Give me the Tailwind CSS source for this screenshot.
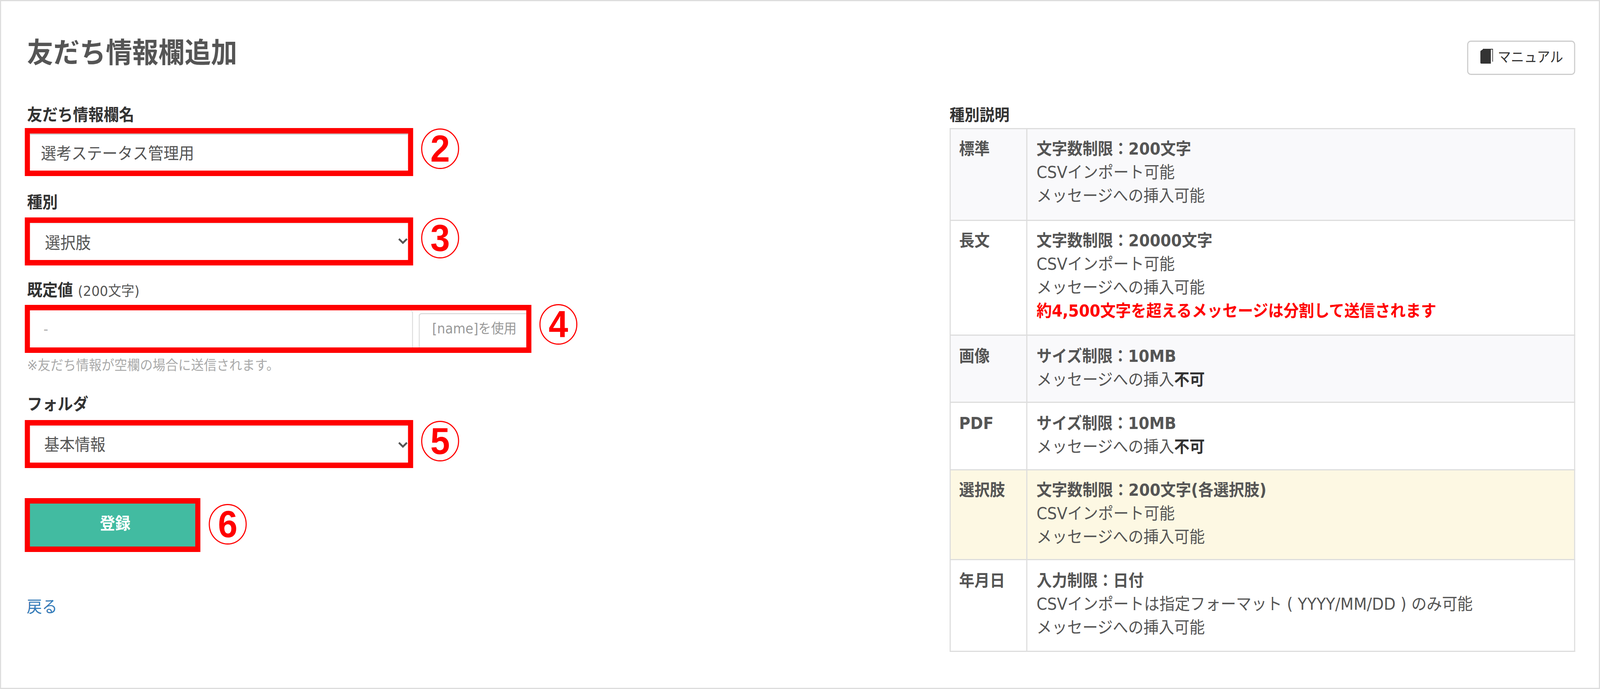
<!DOCTYPE html>
<html lang="ja">
<head>
<meta charset="utf-8">
<title>友だち情報欄追加</title>
<script src="https://cdn.jsdelivr.net/npm/@tailwindcss/browser@4"></script>
</head>
<body class="bg-white overflow-hidden">
<div class="w-[4384px] h-[1765px] origin-top-left scale-x-[0.9343] box-border border-[3px] border-[#dddddd] px-[65px] pt-[99px] overflow-hidden bg-white text-[#555555] text-[42px] font-['DejaVu_Sans','Noto_Sans_CJK_JP',sans-serif]">

  <header class="flex justify-between items-start h-[90px] mb-[82px]">
    <h1 class="text-[72px] leading-[72px] font-bold text-[#555555] ml-[6px] mt-[-3px] whitespace-nowrap">友だち情報欄追加</h1>
    <div class="mt-[2px] w-[296px] h-[88px] box-border border-[3px] border-[#cccccc] rounded-[10px] flex items-start pl-[33px] pt-[15px] text-[36px] leading-[50px] text-[#333333]">
      <svg class="mt-[3px] mr-[13px] shrink-0" width="35" height="38" viewBox="0 0 35 38"><path d="M0 8Q0 5 3 4L6 2H29V38H3Q0 38 0 35Z" fill="#333333"/><path d="M7 1H34V33" fill="none" stroke="#333333" stroke-width="2"/></svg>
      <span>マニュアル</span>
    </div>
  </header>

  <main class="flex justify-between items-start">
    <section class="w-[1600px]">
      <label class="block pl-[6px] text-[42px] leading-[42px] font-bold text-[#333333] mb-[12px]">友だち情報欄名</label>
      <div class="flex items-start gap-[22px]">
        <div class="w-[1064px] h-[123px] box-border border-[14px] border-[#ff0000] bg-white">
          <div class="h-full box-border border-t-[3px] border-[#cccccc] pl-[30px] pt-[13px] leading-[72px]">選考ステータス管理用</div>
        </div>
        <div class="mt-[1px] w-[104px] h-[104px] box-border border-[3px] border-[#ff0000] rounded-full flex items-center justify-center text-[#ff0000] text-[96px] leading-none font-bold font-['Liberation_Sans',sans-serif]">2</div>
      </div>

      <label class="block pl-[6px] mt-[47px] text-[42px] leading-[42px] font-bold text-[#333333] mb-[17px]">種別</label>
      <div class="flex items-start gap-[22px]">
        <div class="w-[1064px] h-[123px] box-border border-[14px] border-[#ff0000] bg-white flex items-center justify-between shadow-[inset_0_3px_3px_rgba(0,0,0,0.06)]">
          <span class="pl-[41px] pt-[8px]">選択肢</span>
          <svg class="shrink-0 mt-[-2px]" width="28" height="17" viewBox="0 0 28 17"><path d="M3 3L14 13L25 3" fill="none" stroke="#555555" stroke-width="5"/></svg>
        </div>
        <div class="mt-[1px] w-[104px] h-[104px] box-border border-[3px] border-[#ff0000] rounded-full flex items-center justify-center text-[#ff0000] text-[96px] leading-none font-bold font-['Liberation_Sans',sans-serif]">3</div>
      </div>

      <div class="pl-[6px] mt-[43px] leading-[42px] mb-[14px] text-[#333333]"><label class="text-[42px] font-bold">既定値</label> <span class="text-[36px] text-[#555555]">(200文字)</span></div>
      <div class="flex items-start gap-[22px]">
        <div class="w-[1388px] h-[123px] box-border border-[14px] border-[#ff0000] bg-white flex overflow-hidden">
          <div class="w-[1050px] h-full box-border border-r-[3px] border-[#dddddd] rounded-tr-[8px] pl-[37px] flex items-center text-[#aaaaaa] text-[36px]">-</div>
          <div class="ml-[15px] mt-[7px] grow h-[100px] box-border border-l-[3px] border-t-[3px] border-[#dddddd] rounded-tl-[8px] pl-[34px] pt-[7px] text-[35px] leading-[60px] text-[#999999] whitespace-nowrap">[name]を使用</div>
        </div>
        <div class="mt-[-2px] w-[104px] h-[104px] box-border border-[3px] border-[#ff0000] rounded-full flex items-center justify-center text-[#ff0000] text-[96px] leading-none font-bold font-['Liberation_Sans',sans-serif]">4</div>
      </div>
      <p class="pl-[6px] mt-[14px] text-[35px] leading-[36px] text-[#aaaaaa]">※友だち情報が空欄の場合に送信されます。</p>

      <label class="block pl-[6px] mt-[61px] text-[42px] leading-[42px] font-bold text-[#333333] mb-[19px]">フォルダ</label>
      <div class="flex items-start gap-[22px]">
        <div class="w-[1064px] h-[123px] box-border border-[14px] border-[#ff0000] bg-white flex items-center justify-between shadow-[inset_0_3px_3px_rgba(0,0,0,0.06)]">
          <span class="pl-[39px] pt-[3px]">基本情報</span>
          <svg class="shrink-0 mt-[3px]" width="28" height="17" viewBox="0 0 28 17"><path d="M3 3L14 13L25 3" fill="none" stroke="#555555" stroke-width="5"/></svg>
        </div>
        <div class="mt-[2px] w-[104px] h-[104px] box-border border-[3px] border-[#ff0000] rounded-full flex items-center justify-center text-[#ff0000] text-[96px] leading-none font-bold font-['Liberation_Sans',sans-serif]">5</div>
      </div>

      <div class="flex items-start gap-[23px] mt-[77px]">
        <div class="w-[481px] h-[138px] box-border border-[14px] border-[#ff0000] bg-[#42bba1] flex items-center justify-center pl-[14px] pb-[8px] text-white font-bold text-[42px]">登録</div>
        <div class="mt-[15px] w-[104px] h-[104px] box-border border-[3px] border-[#ff0000] rounded-full flex items-center justify-center text-[#ff0000] text-[96px] leading-none font-bold font-['Liberation_Sans',sans-serif]">6</div>
      </div>

      <a class="block pl-[5px] mt-[120px] text-[42px] leading-[42px] text-[#337ab7]">戻る</a>
    </section>

    <section class="w-[1714px]">
      <h2 class="text-[41px] leading-[42px] font-bold text-[#333333] mb-[12px]">種別説明</h2>
      <table class="w-full table-fixed border-collapse leading-[60px]">
        <colgroup><col class="w-[210px]"><col></colgroup>
        <tbody>
          <tr class="h-[235px] bg-[#f9f9fb]">
            <th class="border-[3px] border-[#dddddd] align-top text-left font-bold pl-[23px] pt-[21px]">標準</th>
            <td class="border-[3px] border-[#dddddd] align-top pl-[25px] pt-[21px]"><b>文字数制限：200文字</b><br>CSVインポート可能<br>メッセージへの挿入可能</td>
          </tr>
          <tr class="h-[294px]">
            <th class="border-[3px] border-[#dddddd] align-top text-left font-bold pl-[23px] pt-[21px]">長文</th>
            <td class="border-[3px] border-[#dddddd] align-top pl-[25px] pt-[21px]"><b>文字数制限：20000文字</b><br>CSVインポート可能<br>メッセージへの挿入可能<br><b class="text-[#ff0000]">約4,500文字を超えるメッセージは分割して送信されます</b></td>
          </tr>
          <tr class="h-[172px] bg-[#f9f9fb]">
            <th class="border-[3px] border-[#dddddd] align-top text-left font-bold pl-[23px] pt-[23px]">画像</th>
            <td class="border-[3px] border-[#dddddd] align-top pl-[25px] pt-[23px]"><b>サイズ制限：10MB</b><br>メッセージへの挿入<b class="text-[#333333]">不可</b></td>
          </tr>
          <tr class="h-[173px]">
            <th class="border-[3px] border-[#dddddd] align-top text-left font-bold pl-[23px] pt-[23px]">PDF</th>
            <td class="border-[3px] border-[#dddddd] align-top pl-[25px] pt-[23px]"><b>サイズ制限：10MB</b><br>メッセージへの挿入<b class="text-[#333333]">不可</b></td>
          </tr>
          <tr class="h-[230px] bg-[#fdf8e3]">
            <th class="border-[3px] border-[#dddddd] align-top text-left font-bold pl-[23px] pt-[21px]">選択肢</th>
            <td class="border-[3px] border-[#dddddd] align-top pl-[25px] pt-[21px]"><b>文字数制限：200文字(各選択肢)</b><br>CSVインポート可能<br>メッセージへの挿入可能</td>
          </tr>
          <tr class="h-[235px]">
            <th class="border-[3px] border-[#dddddd] align-top text-left font-bold pl-[23px] pt-[23px]">年月日</th>
            <td class="border-[3px] border-[#dddddd] align-top pl-[25px] pt-[23px]"><b>入力制限：日付</b><br>CSVインポートは指定フォーマット ( YYYY/MM/DD ) のみ可能<br>メッセージへの挿入可能</td>
          </tr>
        </tbody>
      </table>
    </section>
  </main>
</div>
</body>
</html>
